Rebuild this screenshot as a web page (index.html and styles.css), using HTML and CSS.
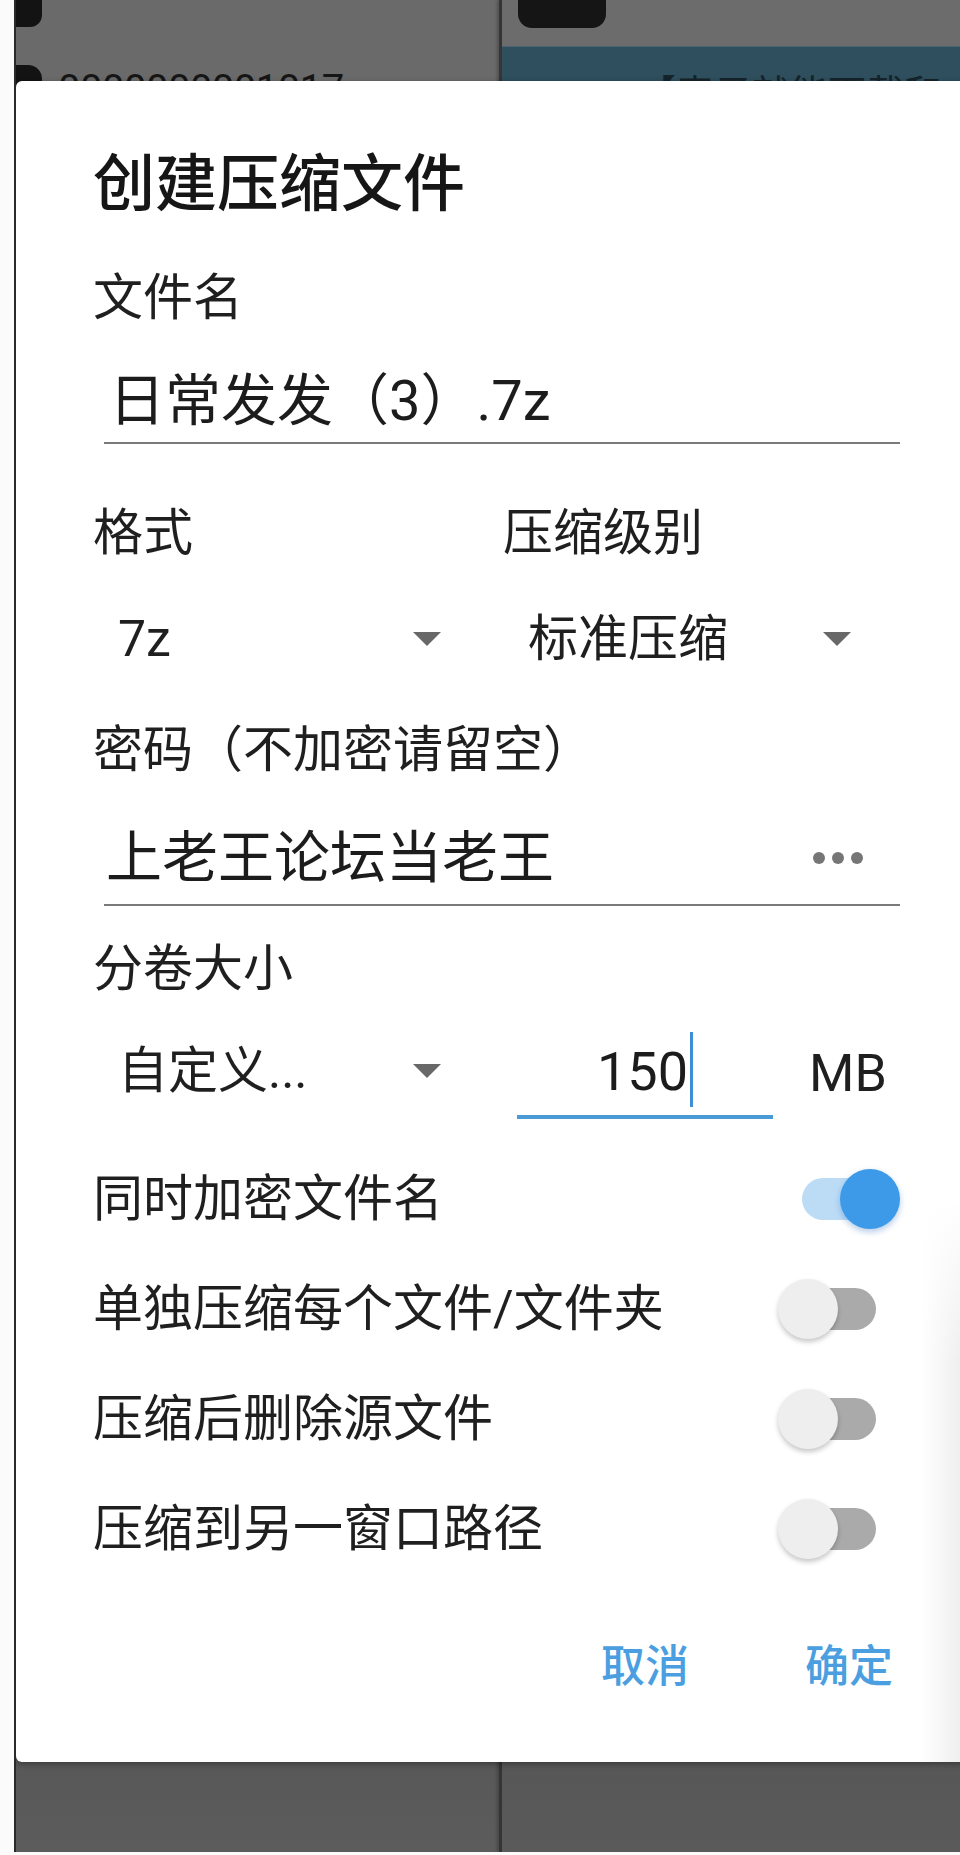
FILE: index.html
```html
<!DOCTYPE html>
<html lang="zh-CN">
<head>
<meta charset="utf-8">
<title>创建压缩文件</title>
<link rel="stylesheet" href="styles.css">
</head>
<body>
<div class="screen">
  <div class="col col-left">
    <div class="icon-a"></div>
    <div class="peek-row"><div class="icon-b"></div><span class="peek-num">0000000001017</span></div>
  </div>
  <div class="divider"></div>
  <div class="col col-right">
    <div class="top-gray"><div class="tab-icon"></div></div>
    <div class="band"><span class="band-text">【表子就能下载和</span></div>
    <div class="rest"></div>
  </div>

  <section class="dialog">
    <h1 class="title">创建压缩文件</h1>
    <div class="label label-first">文件名</div>
    <div class="field field-name"><span class="field-text">日常发发（3）.7z</span></div>

    <div class="pair">
      <div class="cell">
        <div class="label">格式</div>
        <div class="select sel-top"><span>7z</span><i class="caret"></i></div>
      </div>
      <div class="cell">
        <div class="label">压缩级别</div>
        <div class="select sel-top"><span>标准压缩</span><i class="caret"></i></div>
      </div>
    </div>

    <div class="label label-pw">密码（不加密请留空）</div>
    <div class="field field-pw"><span class="field-text">上老王论坛当老王</span><span class="dots"><i></i><i></i><i></i></span></div>

    <div class="label label-split">分卷大小</div>
    <div class="pair split">
      <div class="select sel-split"><span>自定义...</span><i class="caret"></i></div>
      <div class="size">
        <div class="size-input"><span>150</span><i class="cursor"></i></div>
        <span class="unit">MB</span>
      </div>
    </div>

    <div class="switches">
      <div class="switch-row"><span>同时加密文件名</span><span class="switch on"><i class="track"></i><i class="thumb"></i></span></div>
      <div class="switch-row"><span>单独压缩每个文件/文件夹</span><span class="switch"><i class="track"></i><i class="thumb"></i></span></div>
      <div class="switch-row"><span>压缩后删除源文件</span><span class="switch"><i class="track"></i><i class="thumb"></i></span></div>
      <div class="switch-row"><span>压缩到另一窗口路径</span><span class="switch"><i class="track"></i><i class="thumb"></i></span></div>
    </div>

    <div class="actions">
      <button class="btn">取消</button>
      <button class="btn">确定</button>
    </div>
  </section>
</div>
</body>
</html>
```
FILE: styles.css
```css
* { box-sizing: border-box; }

html, body {
  margin: 0;
  padding: 0;
}

body {
  width: 960px;
  height: 1855px;
  overflow: hidden;
  background: #fbfbfb;
  font-family: Roboto, "Noto Sans CJK SC", sans-serif;
  color: #1f1f1f;
}

.screen {
  position: relative;
  margin-left: 14px;
  width: 946px;
  height: 1852px;
  border-left: 2px solid #2a2a2a;
  display: flex;
  overflow: hidden;
}

/* background app (dimmed) */
.col-left {
  width: 483px;
  flex: none;
  background: linear-gradient(to bottom, #6a6a6a 0, #6a6a6a 120px, #555555 1700px, #5c5c5c 1852px);
}

.icon-a {
  width: 26px;
  height: 27px;
  background: #131313;
  border-radius: 0 0 12px 0;
}

.peek-row {
  display: flex;
  align-items: flex-start;
  margin-top: 38px;
}

.icon-b {
  width: 26px;
  height: 40px;
  background: #131313;
  border-radius: 0 14px 0 0;
}

.peek-num {
  margin-left: 16px;
  margin-top: 5px;
  font-size: 40px;
  line-height: 40px;
  color: #161616;
  letter-spacing: -0.5px;
}

.divider {
  width: 3px;
  flex: none;
  background: #353535;
  box-shadow: -2px 0 3px rgba(0, 0, 0, 0.25);
}

.col-right {
  flex: 1;
  min-width: 0;
  display: flex;
  flex-direction: column;
}

.top-gray {
  height: 46px;
  background: #6c6c6c;
}

.tab-icon {
  margin-left: 16px;
  width: 88px;
  height: 28px;
  background: #151515;
  border-radius: 0 0 14px 14px;
}

.band {
  height: 60px;
  background: #2f4f5e;
  border-top: 1px solid #4a6572;
  padding-left: 136px;
  padding-top: 22px;
}

.band-text {
  font-size: 38px;
  line-height: 50px;
  color: #15242b;
  white-space: nowrap;
}

.rest {
  flex: 1;
  background: linear-gradient(to bottom, #555555 1600px, #5a5a5a 1746px);
}

/* dialog */
.dialog {
  position: absolute;
  left: 0;
  top: 81px;
  width: 964px;
  height: 1681px;
  padding: 69px 75px 0 77px;
  border-radius: 6px;
  background:
    linear-gradient(to bottom, #ffffff 1120px, rgba(255, 255, 255, 0) 1280px),
    linear-gradient(to right, #ffffff 905px, #efefef 944px);
  box-shadow: 0 2px 6px rgba(0, 0, 0, 0.35);
}

.title {
  margin: 0;
  font-size: 62px;
  line-height: 70px;
  font-weight: 500;
  color: #161616;
}

.label {
  font-size: 50px;
  line-height: 60px;
  color: #1f1f1f;
  white-space: nowrap;
}

.label-first { margin-top: 48px; }
.label-pw { margin-top: 51px; }
.label-split { margin-top: 33px; }

.field {
  display: flex;
  align-items: center;
  justify-content: space-between;
  margin-left: 11px;
  width: 796px;
  border-bottom: 2px solid #7a7a7a;
}

.field-text {
  font-size: 56px;
  line-height: 60px;
  color: #1c1c1c;
  white-space: nowrap;
}

.field-name {
  padding: 43px 0 11px 5px;
}

.field-pw {
  padding: 48px 37px 16px 2px;
}

.dots {
  display: flex;
  gap: 7px;
}

.dots i {
  width: 12px;
  height: 12px;
  border-radius: 50%;
  background: #767676;
}

.pair {
  display: grid;
  grid-template-columns: 410px 1fr;
  margin-top: 59px;
}

.select {
  width: 370px;
  height: 60px;
  display: flex;
  align-items: center;
  justify-content: space-between;
  padding: 0 22px 0 25px;
  font-size: 50px;
  line-height: 60px;
  color: #1f1f1f;
  white-space: nowrap;
}

.sel-top { margin-top: 46px; }

.caret {
  width: 0;
  height: 0;
  border-left: 14px solid transparent;
  border-right: 14px solid transparent;
  border-top: 14px solid #686868;
}

.split {
  margin-top: 0;
  align-items: start;
}

.sel-split { margin-top: 42px; }

.size {
  display: flex;
  align-items: flex-start;
}

.size-input {
  margin-left: 14px;
  width: 256px;
  padding: 43px 0 13px;
  display: flex;
  align-items: center;
  justify-content: center;
  border-bottom: 4px solid #4b9ad8;
}

.size-input span {
  font-size: 54px;
  line-height: 60px;
  height: 60px;
  color: #1c1c1c;
}

.cursor {
  width: 3px;
  height: 75px;
  margin: -10px 0 -5px 2px;
  background: #3f8fd6;
}

.unit {
  margin-left: 36px;
  margin-top: 45px;
  font-size: 52px;
  line-height: 60px;
  color: #1f1f1f;
}

.switches {
  margin-top: 25px;
}

.switch-row {
  height: 110px;
  display: flex;
  align-items: center;
  justify-content: space-between;
  font-size: 50px;
  line-height: 60px;
  color: #1f1f1f;
  white-space: nowrap;
}

.switch {
  position: relative;
  width: 122px;
  height: 60px;
  margin-right: 5px;
  flex: none;
}

.track {
  position: absolute;
  left: 24px;
  right: 24px;
  top: 9px;
  height: 42px;
  border-radius: 21px;
  background: #aaaaaa;
}

.thumb {
  position: absolute;
  top: 0;
  left: 0;
  width: 60px;
  height: 60px;
  border-radius: 50%;
  background: #eeeeee;
  box-shadow: 0 3px 5px rgba(0, 0, 0, 0.22);
}

.switch.on .track { background: #bcdcf6; }

.switch.on .thumb {
  left: auto;
  right: 0;
  background: #3d9ae8;
  box-shadow: 0 3px 6px rgba(40, 110, 190, 0.35);
}

.actions {
  margin-top: 53px;
  display: flex;
  justify-content: flex-end;
  gap: 92px;
}

.btn {
  border: 0;
  background: none;
  padding: 0 12px;
  margin: 0;
  font-family: Roboto, "Noto Sans CJK SC", sans-serif;
  font-size: 44px;
  line-height: 60px;
  font-weight: 500;
  color: #4b9fe0;
}
```
